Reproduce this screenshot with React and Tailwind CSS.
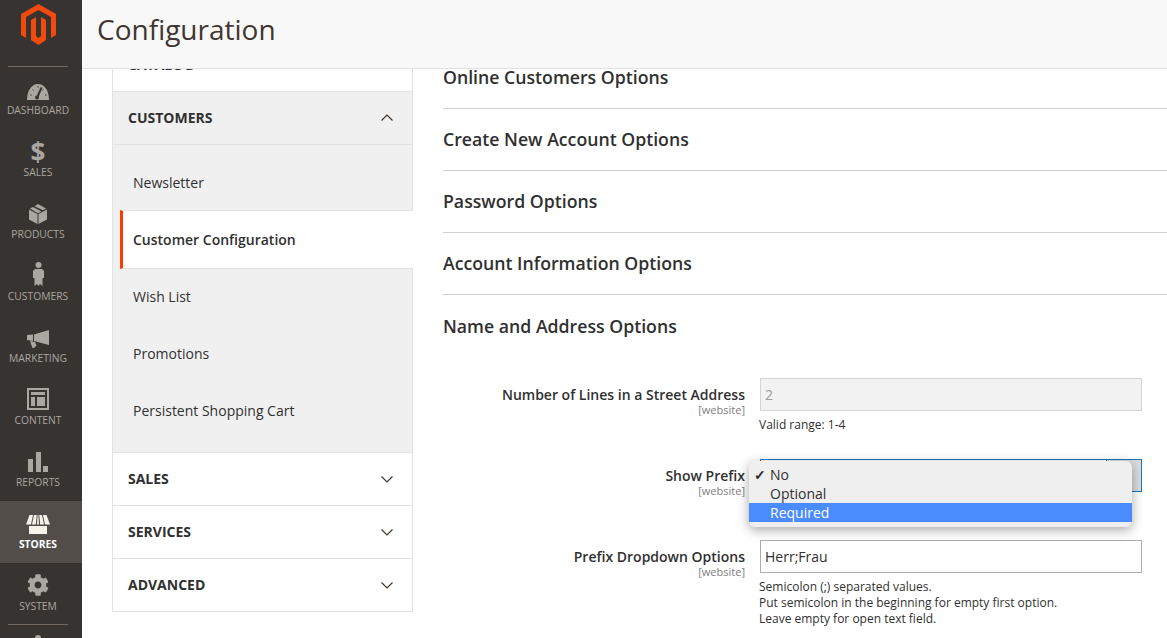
import { FaCog } from 'react-icons/fa';

const iconColor = '#aaa6a0';

function Logo() {
    return (
        <svg width="35" height="41" viewBox="0 0 35 41" fill="#f2490d">
            <path d="M17.5 0 35 10V31L30 34V13L17.5 6 5 13V34L0 31V10Z" />
            <path d="M10 16 15 13V32L17.5 34 20 32V13L25 16V36L17.5 41 10 36Z" />
        </svg>
    );
}

function GaugeIcon() {
    return (
        <svg width="22" height="16" viewBox="0 0 22 16">
            <path d="M0 16C0 6 5 0 11 0S22 6 22 16Z" fill={iconColor} />
            <path d="M10.2 13.5 14.5 3.5" stroke="#373330" strokeWidth="2" />
            <circle cx="10" cy="13.5" r="2" fill="#373330" />
            <path d="M3 11h1.5M5.5 5.5l1 1M11 2v1.5M18 11h1.5M16.5 5.5l-1 1" stroke="#373330" strokeWidth="1" />
        </svg>
    );
}

function BoxIcon() {
    return (
        <svg width="18" height="20" viewBox="0 0 18 20" fill={iconColor}>
            <path d="M0 5.5 8.5 10V20L0 15.5Z" />
            <path d="M18 5.5 9.5 10V20L18 15.5Z" />
            <path d="M1 4.5 4 3 12.5 7.5 9 9.2Z" />
            <path d="M5.5 2.2 9 0 17 4.5 14 6.3Z" />
        </svg>
    );
}

function PersonIcon() {
    return (
        <svg width="11" height="24" viewBox="0 0 11 24" fill={iconColor}>
            <circle cx="5.5" cy="3" r="3" />
            <path d="M2 7H9L11 9V16H9.5V24L7 22 5.5 24 4 22 1.5 24V16H0V9Z" />
        </svg>
    );
}

function MegaphoneIcon() {
    return (
        <svg width="22" height="18" viewBox="0 0 22 18" fill={iconColor}>
            <path d="M7 4.5 22 0V15L7 11Z" />
            <path d="M0 5 6 4.5V11L0 10Z" />
            <path d="M3 11 8 12 9.5 15.5 7 18H5.5Z" />
        </svg>
    );
}

function ContentIcon() {
    return (
        <svg width="22" height="22" viewBox="0 0 22 22" fill={iconColor}>
            <path d="M0 0H22V22H0ZM2 2V20H20V2Z" fillRule="evenodd" />
            <rect x="4" y="4" width="14" height="3" />
            <rect x="4" y="9" width="4" height="9" />
            <rect x="10" y="9" width="8" height="9" />
        </svg>
    );
}

function BarsIcon() {
    return (
        <svg width="20" height="20" viewBox="0 0 20 20" fill={iconColor}>
            <rect x="0" y="7" width="5" height="13" />
            <rect x="8" y="0" width="5" height="20" />
            <rect x="15" y="14" width="5" height="6" />
        </svg>
    );
}

function StoreIcon() {
    return (
        <svg width="24" height="19" viewBox="0 0 24 19" fill="#f7f3eb">
            <path d="M3 11H21V19H3Z" />
            <path d="M3.5 0H7L5 9.5H0Z" />
            <path d="M8 0H10.7L9.8 9.5H6Z" />
            <path d="M11.6 0H12.4L13 9.5H11Z" />
            <path d="M13.3 0H16L18 9.5H14.2Z" />
            <path d="M17 0H20.5L24 9.5H19Z" />
        </svg>
    );
}

function Chevron({ up }) {
    return (
        <svg
            width="12"
            height="7"
            viewBox="0 0 12 7"
            fill="none"
            stroke="#41362f"
            strokeWidth="1.2"
            className={up ? '' : 'translate-y-px'}
        >
            <path d={up ? 'M0.5 6.5 6 1 11.5 6.5' : 'M0.5 0.5 6 6 11.5 0.5'} />
        </svg>
    );
}

const navItems = [
    { label: 'Dashboard', icon: <GaugeIcon /> },
    { label: 'Sales', icon: <span className="text-[26px] leading-[20px] font-bold text-[#aaa6a0]">$</span> },
    { label: 'Products', icon: <BoxIcon /> },
    { label: 'Customers', icon: <PersonIcon /> },
    { label: 'Marketing', icon: <MegaphoneIcon /> },
    { label: 'Content', icon: <ContentIcon /> },
    { label: 'Reports', icon: <BarsIcon /> },
    { label: 'Stores', icon: <StoreIcon />, active: true },
    { label: 'System', icon: <FaCog size={22} color={iconColor} /> },
];

function Sidebar() {
    return (
        <aside className="w-[82px] shrink-0 h-full bg-[#373330] flex flex-col overflow-hidden">
            <div className="h-[67px] shrink-0 flex flex-col pr-[5px]">
                <div className="h-[66px] w-full pt-[4px] flex justify-center">
                    <Logo />
                </div>
                <div className="h-px w-[60px] ml-[8px] bg-[#736963]" />
            </div>
            {navItems.map(item => (
                <div
                    key={item.label}
                    className={`h-[62px] shrink-0 flex flex-col items-center pr-[6px] ${item.active ? 'bg-[#524d49] text-white font-bold' : 'text-[#aaa6a0]'}`}
                >
                    <div className="h-[36px] w-full flex items-end justify-center pb-[3px]">{item.icon}</div>
                    <span className="text-[10.3px] leading-[14px] uppercase">{item.label}</span>
                </div>
            ))}
            <div className="h-px w-[60px] ml-[8px] bg-[#736963] shrink-0 -mt-px" />
            <div className="h-[6px] w-[6px] ml-[35px] mt-[10px] rounded-full bg-[#aaa6a0] shrink-0" />
        </aside>
    );
}

function TabHeader({ label, open, className = '' }) {
    return (
        <div className={`h-[53px] flex items-center justify-between pl-[15px] pr-[19px] pb-[2px] border-b border-[#e3e3e3] ${className}`}>
            <span className="text-[14px] font-bold text-[#303030] uppercase">{label}</span>
            <Chevron up={open} />
        </div>
    );
}

function ConfigTabs() {
    const items = ['Newsletter', 'Customer Configuration', 'Wish List', 'Promotions', 'Persistent Shopping Cart'];

    return (
        <div className="w-[301px] shrink-0 -mt-[30px] border-x border-[#e3e3e3] self-start">
            <TabHeader label="Catalog" />
            <TabHeader label="Customers" open className="bg-[#f0f0f0]" />
            <div className="bg-[#f0f0f0] pt-[9px] pb-[13px] border-b border-[#e3e3e3]">
                {items.map(item => {
                    const active = item === 'Customer Configuration';
                    return (
                        <div
                            key={item}
                            className={
                                active
                                    ? 'h-[59px] -my-px relative ml-[7px] -mr-px flex items-center bg-white border-l-[3px] border-[#ff3c00] border-y border-y-[#e3e3e3] pl-[10px] text-[14px] font-semibold text-[#303030]'
                                    : 'h-[57px] flex items-center pl-[20px] text-[14px] text-[#303030]'
                            }
                        >
                            {item}
                        </div>
                    );
                })}
            </div>
            <TabHeader label="Sales" />
            <TabHeader label="Services" />
            <TabHeader label="Advanced" />
        </div>
    );
}

function FieldLabel({ children }) {
    return (
        <div className="w-[302px] shrink-0 text-right pt-[7px]">
            <div className="text-[14px] leading-[20px] font-semibold text-[#303030]">{children}</div>
            <div className="text-[11px] leading-[11px] -mt-px text-[#808080]">[website]</div>
        </div>
    );
}

function Help({ lines }) {
    return (
        <div className="mt-[6px] -ml-px text-[12px] leading-[16px] text-[#303030]">
            {lines.map(line => (
                <div key={line}>{line}</div>
            ))}
        </div>
    );
}

function PrefixSelect() {
    return (
        <div className="relative h-[33px] flex border border-[#1979c3] bg-white">
            <div className="flex-1" />
            <div className="w-[35px] border-l border-[#1979c3] bg-[#dcdcdc]" />
            <div className="absolute -left-[12px] top-[1px] w-[383px] h-[66px] pt-[4px] rounded-[6px] bg-[#efefef] shadow-[0_3px_12px_rgba(0,0,0,0.35)] text-[14px] leading-[19px] text-[#303030]">
                <div className="relative pl-[21px]">
                    <span className="absolute left-[5px] top-0 text-[14px] font-bold">✓</span>
                    No
                </div>
                <div className="pl-[21px]">Optional</div>
                <div className="pl-[21px] bg-[#4a8bff] text-white">Required</div>
            </div>
        </div>
    );
}

function ConfigForm() {
    const sections = ['Online Customers Options', 'Create New Account Options', 'Password Options', 'Account Information Options'];

    return (
        <div className="flex-1 -mt-[22px] ml-[30px]">
            {sections.map(title => (
                <div key={title} className="h-[62px] flex items-center border-b border-[#d1d1d1]">
                    <h2 className="text-[17.7px] font-semibold text-[#303030]">{title}</h2>
                </div>
            ))}
            <div className="h-[62px] flex items-center">
                <h2 className="text-[17.7px] font-semibold text-[#303030]">Name and Address Options</h2>
            </div>

            <div className="flex gap-[15px] mt-[21px]">
                <FieldLabel>Number of Lines in a Street Address</FieldLabel>
                <div className="w-[382px]">
                    <input
                        readOnly
                        value="2"
                        className="w-full h-[33px] px-[4px] border border-[#d4d4d4] bg-[#f2f2f2] text-[14px] text-[#999] outline-none"
                    />
                    <Help lines={['Valid range: 1-4']} />
                </div>
            </div>

            <div className="flex gap-[15px] mt-[26px]">
                <FieldLabel>Show Prefix</FieldLabel>
                <div className="w-[382px]">
                    <PrefixSelect />
                </div>
            </div>

            <div className="flex gap-[15px] mt-[44px]">
                <FieldLabel>Prefix Dropdown Options</FieldLabel>
                <div className="w-[382px]">
                    <input
                        readOnly
                        value="Herr;Frau"
                        className="w-full h-[33px] px-[4px] border border-[#adadad] bg-white text-[14px] text-[#303030] outline-none"
                    />
                    <Help
                        lines={[
                            'Semicolon (;) separated values.',
                            'Put semicolon in the beginning for empty first option.',
                            'Leave empty for open text field.',
                        ]}
                    />
                </div>
            </div>
        </div>
    );
}

export default function App() {
    return (
        <div className="h-[638px] w-[1167px] flex overflow-hidden bg-white font-['Open_Sans',sans-serif]">
            <Sidebar />
            <div className="flex-1 flex flex-col min-w-0">
                <header className="relative z-10 h-[69px] shrink-0 bg-[#f8f8f8] border-b border-[#e3e3e3] pl-[15px] pt-[9px]">
                    <h1 className="text-[28px] leading-[40px] text-[#41362f]">Configuration</h1>
                </header>
                <main className="flex-1 flex min-h-0 pl-[30px]">
                    <ConfigTabs />
                    <ConfigForm />
                </main>
            </div>
        </div>
    );
}
